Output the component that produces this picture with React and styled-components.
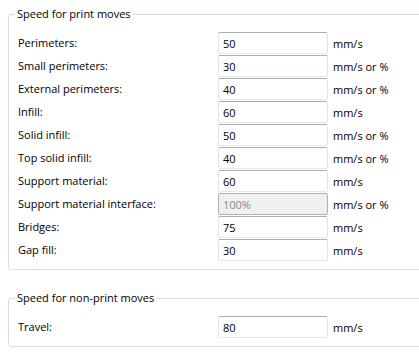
import styled, { createGlobalStyle } from "styled-components";

const GlobalStyle = createGlobalStyle`
  html, body {
    margin: 0;
    padding: 0;
    background: #ffffff;
    overflow: hidden;
  }
  body {
    font-family: "Open Sans", "Noto Sans", sans-serif;
    font-size: 11px;
    color: #000000;
  }
`;

const printMoves = [
  { label: "Perimeters:", value: "50", unit: "mm/s" },
  { label: "Small perimeters:", value: "30", unit: "mm/s or %" },
  { label: "External perimeters:", value: "40", unit: "mm/s or %" },
  { label: "Infill:", value: "60", unit: "mm/s" },
  { label: "Solid infill:", value: "50", unit: "mm/s or %" },
  { label: "Top solid infill:", value: "40", unit: "mm/s or %" },
  { label: "Support material:", value: "60", unit: "mm/s" },
  { label: "Support material interface:", value: "100%", unit: "mm/s or %", disabled: true },
  { label: "Bridges:", value: "75", unit: "mm/s" },
  { label: "Gap fill:", value: "30", unit: "mm/s" },
];

const nonPrintMoves = [{ label: "Travel:", value: "80", unit: "mm/s" }];

function Group({ title, rows, first }) {
  return (
    <GroupBox $first={first}>
      <Title>{title}</Title>
      <Rows>
        {rows.map((r) => (
          <Row key={r.label}>
            <Label>{r.label}</Label>
            <Field $disabled={r.disabled}>{r.value}</Field>
            <Unit>{r.unit}</Unit>
          </Row>
        ))}
      </Rows>
    </GroupBox>
  );
}

export default function App() {
  return (
    <>
      <GlobalStyle />
      <Page>
        <Group title="Speed for print moves" rows={printMoves} first />
        <Group title="Speed for non-print moves" rows={nonPrintMoves} />
      </Page>
    </>
  );
}

const Page = styled.div`
  width: 419px;
  height: 354px;
  overflow: hidden;
  padding-top: 6px;
  box-sizing: border-box;
`;

const GroupBox = styled.fieldset`
  width: 440px;
  margin: ${(p) => (p.$first ? "0" : "20px")} 0 0 8px;
  padding: 10px 0 8px 9px;
  border: 1px solid #d5dfe5;
  border-radius: 3px;
  box-sizing: border-box;
`;

const Title = styled.legend`
  padding: 0 2px;
  margin-left: -3px;
  line-height: 16px;
  color: #000000;
`;

const Rows = styled.div`
  display: flex;
  flex-direction: column;
  gap: 1px;
`;

const Row = styled.div`
  display: grid;
  grid-template-columns: 200px 110px auto;
  align-items: center;
  height: 22px;
`;

const Label = styled.span`
  line-height: 16px;
`;

const Field = styled.div`
  height: 22px;
  box-sizing: border-box;
  border: 1px solid #e2e3ea;
  border-top-color: #abadb3;
  border-bottom-color: #e3e9ef;
  border-radius: 2px;
  padding: 0 4px;
  display: flex;
  align-items: center;
  background: ${(p) => (p.$disabled ? "#f0f0f0" : "#ffffff")};
  color: ${(p) => (p.$disabled ? "#8a8a8a" : "#000000")};
  ${(p) => p.$disabled && "border-color: #adb2b5;"}
`;

const Unit = styled.span`
  padding-left: 5px;
`;
